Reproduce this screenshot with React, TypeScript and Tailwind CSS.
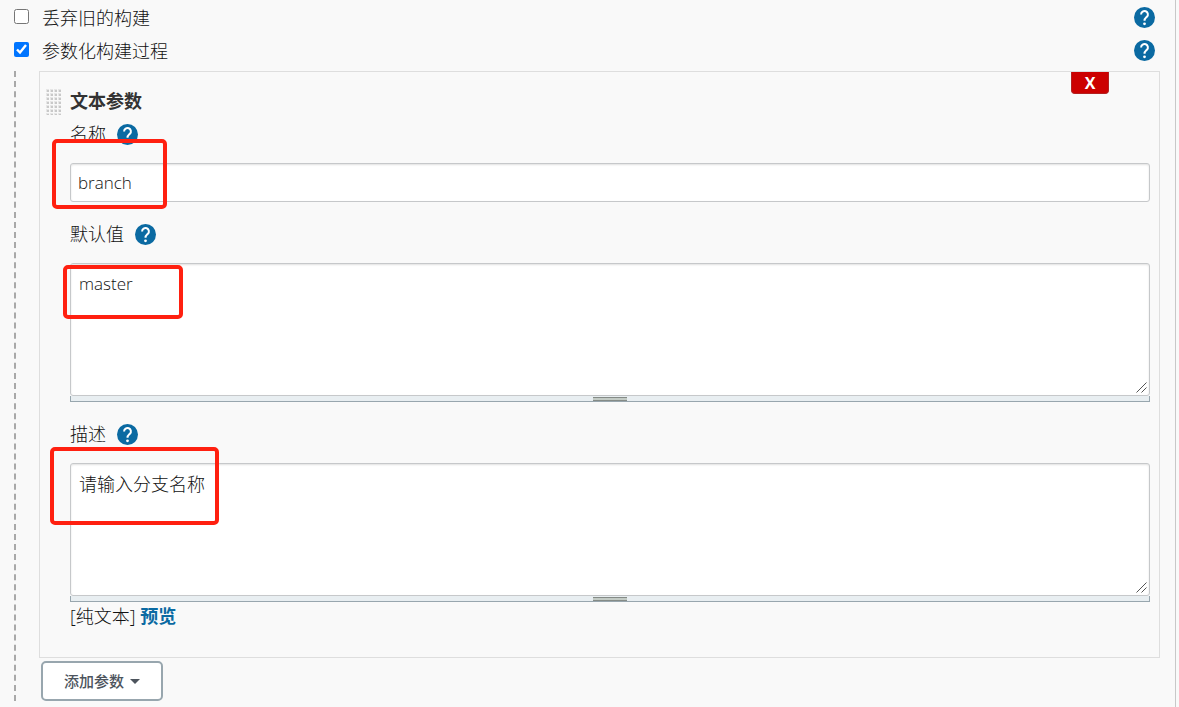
import { useState } from "react";

type HelpProps = {
  label: string;
};

function HelpButton({ label }: HelpProps) {
  return (
    <button type="button" aria-label={`帮助: ${label}`} className="h-[21px] w-[21px] shrink-0 cursor-pointer">
      <svg viewBox="0 0 21 21" className="block h-full w-full">
        <circle cx="10.5" cy="10.5" r="10.5" fill="#0b6aa2" />
        <path
          d="M7.1 7.4a3.4 3.4 0 1 1 5.8 2.4c-1.1 1.1-2.4 1.8-2.4 4"
          fill="none"
          stroke="#fff"
          strokeWidth="2"
        />
        <circle cx="10.5" cy="16.8" r="1.4" fill="#fff" />
      </svg>
    </button>
  );
}

function DragHandle() {
  return (
    <svg viewBox="0 0 15 26" className="mt-[17px] mr-[9px] h-[26px] w-[15px] shrink-0 cursor-move">
      <defs>
        <pattern id="grip-dots" width="4" height="4" patternUnits="userSpaceOnUse">
          <rect width="3" height="3" fill="#e6e6e6" />
          <rect x="1" y="1" width="2" height="2" fill="#c9c9c9" />
        </pattern>
      </defs>
      <rect width="15" height="26" fill="url(#grip-dots)" />
    </svg>
  );
}

type OptionRowProps = {
  id: string;
  label: string;
  checked: boolean;
  onChange: (checked: boolean) => void;
};

function OptionRow({ id, label, checked, onChange }: OptionRowProps) {
  return (
    <div className="flex h-[33px] items-center pt-0.5 pr-5 pl-3.5">
      <input
        id={id}
        type="checkbox"
        className="mb-0.5 h-[15px] w-[15px] shrink-0 accent-[#0075ff]"
        checked={checked}
        onChange={(event) => onChange(event.target.checked)}
      />
      <label htmlFor={id} className="ml-[13px] flex-1">
        {label}
      </label>
      <HelpButton label={label} />
    </div>
  );
}

type FieldProps = {
  id: string;
  label: string;
  children: React.ReactNode;
};

function Field({ id, label, children }: FieldProps) {
  return (
    <div className="relative">
      <div className="mb-[11px] flex h-9 items-center gap-[11px]">
        <label htmlFor={id}>{label}</label>
        <HelpButton label={label} />
      </div>
      {children}
    </div>
  );
}

type TextBoxProps = {
  id: string;
  value: string;
  large?: boolean;
  onChange: (value: string) => void;
};

function TextBox({ id, value, large, onChange }: TextBoxProps) {
  return (
    <div>
      <div className="relative">
        <textarea
          id={id}
          className={`block h-[133px] w-full resize-none rounded-[3px] border border-[#c6c8ca] bg-white px-2 py-1.5 leading-7 shadow-[inset_0_1px_2px_rgba(0,0,0,0.12)] outline-none ${
            large ? "text-lg" : "text-[17px]"
          }`}
          value={value}
          onChange={(event) => onChange(event.target.value)}
        />
        <svg viewBox="0 0 11 11" className="pointer-events-none absolute right-[3px] bottom-[3px] h-[11px] w-[11px]">
          <path d="M0.5 10.5l10-10M5.5 10.5l5-5" stroke="#555" strokeWidth="1" />
        </svg>
      </div>
      <div className="flex h-1.5 justify-center border-x border-b border-[#98a6ae] bg-[#e8eef1] pt-px">
        <div className="h-1 w-[34px] border-y border-[#858b87] bg-[#c3cbc5]" />
      </div>
    </div>
  );
}

export default function App() {
  const [discardOld, setDiscardOld] = useState(false);
  const [parameterized, setParameterized] = useState(true);
  const [name, setName] = useState("branch");
  const [defaultValue, setDefaultValue] = useState("master");
  const [description, setDescription] = useState("请输入分支名称");

  return (
    <div className="min-h-screen bg-[#f9f9f9] pr-[3px] font-['Open_Sans','Noto_Sans_CJK_SC',sans-serif] text-lg leading-7 font-light text-[#111]">
      <main className="min-h-screen border-r border-[#c8c8c8]">
        <OptionRow id="discard-old" label="丢弃旧的构建" checked={discardOld} onChange={setDiscardOld} />
        <OptionRow id="parameterized" label="参数化构建过程" checked={parameterized} onChange={setParameterized} />

        <div className="mt-[5px] mr-[15px] ml-3.5 border-l-2 border-dashed border-[#a9a9a9] pl-[23px]">
          <section className="flex border border-[#dedede] pr-[9px] pb-[27px] pl-1.5">
            <DragHandle />
            <div className="flex-1">
              <header className="flex items-start justify-between pr-[41px]">
                <h2 className="pt-[15px] pb-px font-bold text-[#333]">文本参数</h2>
                <button
                  type="button"
                  aria-label="删除"
                  className="h-[22px] w-[38px] rounded-b-[4px] border-x border-b border-[#b32020] bg-[#cc0000] text-base leading-5 font-bold text-white"
                >
                  X
                </button>
              </header>

              <div className="flex flex-col gap-3.5">
                <Field id="param-name" label="名称">
                  <input
                    id="param-name"
                    type="text"
                    className="block h-[39px] w-full rounded-[3px] border border-[#c6c8ca] bg-white px-[7px] text-[17px] shadow-[inset_0_1px_2px_rgba(0,0,0,0.12)] outline-none"
                    value={name}
                    onChange={(event) => setName(event.target.value)}
                  />
                  <div className="pointer-events-none absolute top-[23px] -left-[18px] h-[70px] w-[115px] rounded-[5px] border-4 border-[#ff2010]" />
                </Field>
                <Field id="param-default" label="默认值">
                  <TextBox id="param-default" value={defaultValue} onChange={setDefaultValue} />
                  <div className="pointer-events-none absolute top-[49px] -left-[7px] h-[54px] w-[120px] rounded-[5px] border-4 border-[#ff2010]" />
                </Field>
                <Field id="param-description" label="描述">
                  <TextBox id="param-description" large value={description} onChange={setDescription} />
                  <div className="pointer-events-none absolute top-[31px] -left-5 h-[78px] w-[169px] rounded-[5px] border-4 border-[#ff2010]" />
                </Field>
              </div>

              <p>
                [纯文本]{" "}
                <a href="#preview" className="font-bold text-[#0b6aa2]">
                  预览
                </a>
              </p>
            </div>
          </section>

          <button
            type="button"
            className="mt-[3px] ml-0.5 flex h-10 w-[122px] items-center justify-center gap-1.5 rounded-[5px] border-2 border-[#98a6ae] bg-white text-[15px] font-medium text-[#4d545d]"
          >
            添加参数
            <svg viewBox="0 0 10 5" className="h-[5px] w-2.5" fill="#4d545d">
              <path d="M0 0h10L5 5z" />
            </svg>
          </button>
        </div>
      </main>
    </div>
  );
}
